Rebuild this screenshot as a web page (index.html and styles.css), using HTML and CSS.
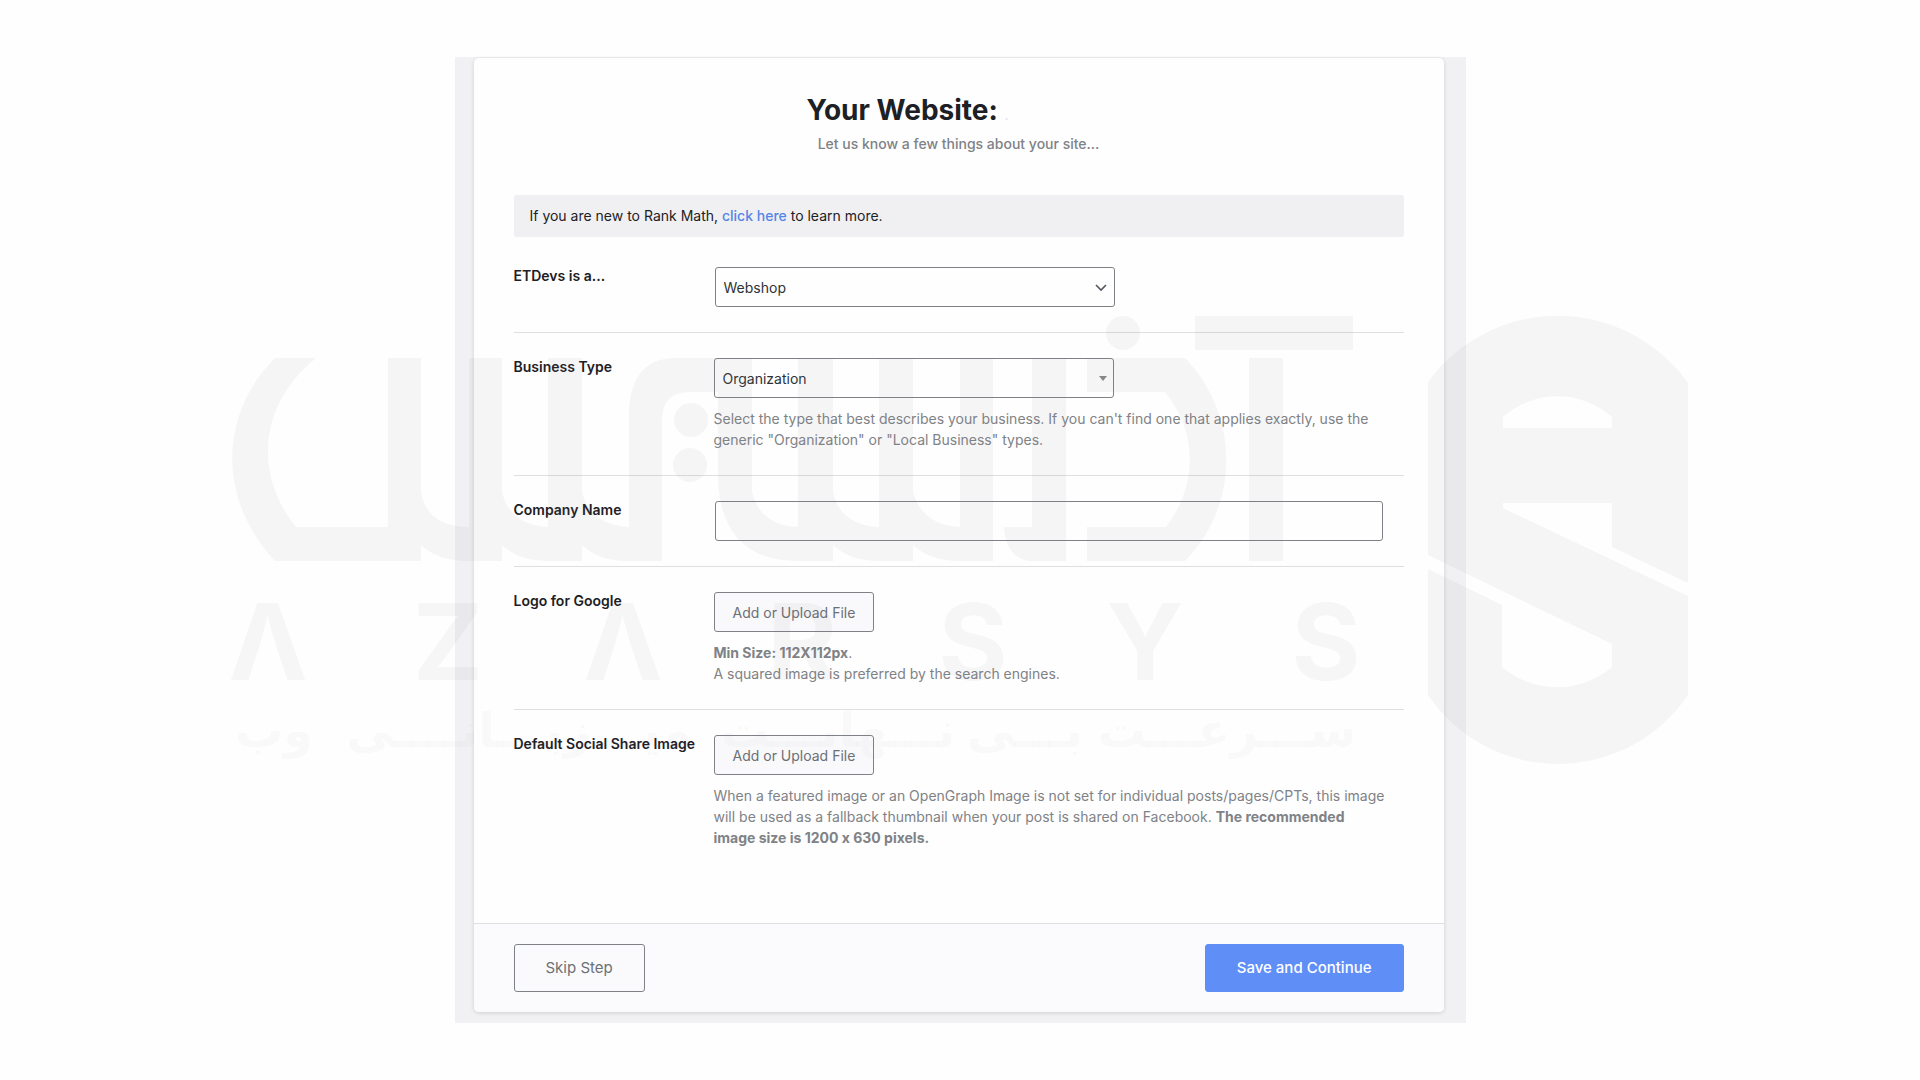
FILE: index.html
```html
<!DOCTYPE html>
<html lang="en">
<head>
<meta charset="utf-8">
<meta name="viewport" content="width=device-width, initial-scale=1">
<title>Your Website</title>
<link rel="stylesheet" href="styles.css">
</head>
<body>
<main class="wizard">
  <form class="card">
    <div class="card-body">
      <header class="intro">
        <h1 class="title">Your Website: <span class="title-dot">.</span></h1>
        <p class="subtitle">Let us know a few things about your site...</p>
      </header>
      <p class="notice">If you are new to Rank Math, <a href="#">click here</a> to learn more.</p>

      <div class="row">
        <label class="label" for="site-type">ETDevs is a...</label>
        <div class="field">
          <div class="select-wrap native">
            <select class="control" id="site-type"><option>Webshop</option></select>
            <svg class="chevron" viewBox="0 0 12 8" aria-hidden="true"><path d="M1 1l5 5 5-5" fill="none" stroke="#50575e" stroke-width="1.6"/></svg>
          </div>
        </div>
      </div>

      <div class="row">
        <label class="label" for="business-type">Business Type</label>
        <div class="field">
          <div class="select-wrap">
            <select class="control" id="business-type"><option>Organization</option></select>
            <svg class="caret" viewBox="0 0 8 5" aria-hidden="true"><path d="M0 0h8L4 5z" fill="#888"/></svg>
          </div>
          <p class="hint">Select the type that best describes your business. If you can't find one that applies exactly, use the generic "Organization" or "Local Business" types.</p>
        </div>
      </div>

      <div class="row">
        <label class="label" for="company">Company Name</label>
        <div class="field">
          <input class="control native company" id="company" type="text">
        </div>
      </div>

      <div class="row">
        <label class="label" for="logo">Logo for Google</label>
        <div class="field">
          <button class="upload" id="logo" type="button">Add or Upload File</button>
          <p class="hint"><strong>Min Size: 112X112px</strong>.<br>A squared image is preferred by the search engines.</p>
        </div>
      </div>

      <div class="row">
        <label class="label" for="share">Default Social Share Image</label>
        <div class="field">
          <button class="upload" id="share" type="button">Add or Upload File</button>
          <p class="hint">When a featured image or an OpenGraph Image is not set for individual posts/pages/CPTs, this image will be used as a fallback thumbnail when your post is shared on Facebook. <strong>The recommended image size is 1200 x 630 pixels.</strong></p>
        </div>
      </div>
    </div>
    <footer class="actions">
      <button class="btn btn-outline" type="button">Skip Step</button>
      <button class="btn btn-primary" type="submit">Save and Continue</button>
    </footer>
  </form>
</main>

<svg class="watermark" viewBox="0 0 1460 460" aria-hidden="true">
  <g transform="translate(-230 -310)">
    <path fill-rule="evenodd" d="M1428 382A160 160 0 0 1 1688 383V583L1612 547V503H1503V508L1688 596V695A157 157 0 0 1 1428 695V569L1502 605V667A85 85 0 0 0 1612 667V644L1428 555ZM1503 428V417A82 82 0 0 1 1612 417V428Z"/>
    <path d="M275 358H316C258 405 254 475 296 527H388V358H421V492Q427 527 469 527V358H502V492Q510 525 548 527V358H582V492Q590 525 629 527V410Q632 358 676 358H752V492Q760 525 798 527V358H833V492Q840 525 879 527V358H913V492Q922 525 960 527V358H993V561H960Q930 561 913 545V561H879Q850 561 833 545V561H798Q722 561 718 480V392H690Q662 392 662 420V561H629Q598 561 582 545V561H548Q518 561 502 545V561H469Q438 561 421 545V561H275C218 500 218 415 275 358Z"/>
    <path d="M1032 358H1066V561H1030Q1006 558 1004 527H1032ZM1087 358H1185C1240 415 1240 505 1185 561H1087V527H1166C1198 485 1198 432 1165 392H1087ZM1249 358H1283V561H1249ZM1195 316H1353V350H1195Z"/>
    <circle cx="691" cy="420" r="17"/>
    <circle cx="690" cy="465" r="17"/>
    <circle cx="1123" cy="333" r="17"/>
    <g class="wm-latin">
      <text x="268" y="680">Λ</text>
      <text x="448" y="680">Z</text>
      <text x="623" y="680">Λ</text>
      <text x="802" y="680">R</text>
      <text x="973" y="680">S</text>
      <text x="1145" y="680">Y</text>
      <text x="1326" y="680">S</text>
    </g>
    <g class="wm-persian">
      <text x="1227" y="747">ســـرعـــت</text>
      <text x="1025" y="747">بـــی</text>
      <text x="838" y="747">نـــهایـــت</text>
      <text x="519" y="747">میـــزبـــانــــی</text>
      <text x="274" y="747">وب</text>
    </g>
  </g>
</svg>
</body>
</html>
```
FILE: styles.css
```css
* { box-sizing: border-box; }

body {
  position: relative;
  margin: 0;
  min-height: 100vh;
  padding: 57px 0;
  overflow-x: hidden;
  background: #fefefe;
  color: #1d2024;
  font: 14px/21px Inter, "Liberation Sans", sans-serif;
  font-feature-settings: "calt" 0;
}

.wizard {
  max-width: 1011px;
  margin: 0 auto;
  padding: 1px 22px 11px 19px;
  background: #f1f1f3;
}

.card {
  overflow: hidden;
  border-radius: 5px;
  background: #fefefe;
  box-shadow: 0 1px 4px rgba(0, 0, 0, 0.14);
}

.card-body { padding: 32px 40px 50px; }

.intro {
  display: flex;
  flex-direction: column;
  align-items: center;
  margin-bottom: 41px;
}

.title {
  width: 304px;
  margin: 0;
  font-size: 28px;
  font-weight: 700;
  line-height: 40px;
}

.title-dot { color: #ddd; font-size: 14px; font-weight: 400; line-height: 1; }

.subtitle { margin: 0; padding-top: 3px; color: #7f8286; font-weight: 500; }

.notice {
  margin: 0 0 5px;
  padding: 10px 16px;
  border-radius: 2px;
  background: #f0f0f3;
  line-height: 22px;
}

.notice a { color: #5585e6; font-weight: 500; text-decoration: none; }

.row {
  display: grid;
  grid-template-columns: 200px 1fr;
  padding: 25px 0;
  border-bottom: 1px solid #dddfe2;
}

.row:last-child { border-bottom: 0; }

.label { font-weight: 600; line-height: 18px; }

.select-wrap { position: relative; max-width: 400px; }

.control {
  display: block;
  width: 100%;
  height: 40px;
  padding: 0 8px;
  appearance: none;
  border: 1px solid #7e8186;
  border-radius: 3px;
  background: #fefefe;
  color: #2c3338;
  font: inherit;
}

.native { margin-left: 1px; }

.company { max-width: 668px; }

.chevron { position: absolute; top: 17px; right: 8px; width: 12px; height: 8px; }

.caret { position: absolute; top: 18px; right: 7px; width: 8px; height: 5px; }

.hint { margin: 10px 16px 0 0; color: #7f8286; }

.upload {
  display: block;
  height: 40px;
  padding: 0 18px;
  border: 1px solid #7e8186;
  border-radius: 3px;
  background: #f9f9fb;
  color: #6c7075;
  font: inherit;
}

.actions {
  display: flex;
  justify-content: space-between;
  padding: 20px 40px;
  border-top: 1px solid #dddfe2;
  background: #fbfbfd;
}

.btn {
  height: 48px;
  padding: 0 31px;
  border: 1px solid #7e8186;
  border-radius: 3px;
  font: 15px/24px Inter, "Liberation Sans", sans-serif;
}

.btn-outline { background: #fafafc; color: #6c7075; }

.btn-primary { border-color: #5f8ef7; background: #5f8ef7; color: #fff; font-weight: 500; }

.watermark {
  position: absolute;
  top: 310px;
  left: 50%;
  width: 1460px;
  margin-left: -730px;
  overflow: visible;
  fill: #7d7d90;
  fill-opacity: 0.07;
  pointer-events: none;
}

.wm-latin { font: 700 106px Inter, sans-serif; text-anchor: middle; fill-opacity: 0.06; }

.wm-persian { font: 700 48px "DejaVu Sans", sans-serif; text-anchor: middle; fill-opacity: 0.05; }
```
